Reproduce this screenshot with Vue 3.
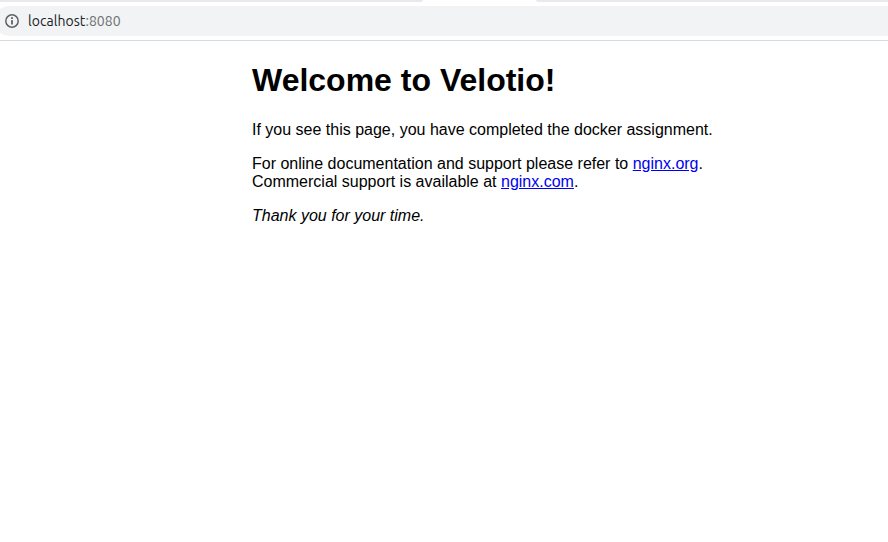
<script setup>
const host = 'localhost'
const port = ':8080'
</script>

<template>
  <div class="window">
    <div class="tabs">
      <div class="strip left"></div>
      <div class="strip right"></div>
    </div>
    <div class="toolbar">
      <div class="address">
        <svg class="info" viewBox="0 0 14 14" width="14" height="14" aria-hidden="true">
          <circle cx="7" cy="7" r="6.2" fill="none" stroke="#5f6368" stroke-width="1.5" />
          <rect x="6.1" y="3.2" width="1.8" height="1.8" fill="#5f6368" />
          <rect x="6.1" y="6.1" width="1.8" height="4.4" fill="#5f6368" />
        </svg>
        <span class="url"><span>{{ host }}</span><span class="port">{{ port }}</span></span>
      </div>
    </div>
    <main class="page">
      <h1>Welcome to Velotio!</h1>
      <p>If you see this page, you have completed the docker assignment.</p>
      <p>
        For online documentation and support please refer to <a href="#">nginx.org</a>.<br />
        Commercial support is available at <a href="#">nginx.com</a>.
      </p>
      <p><em>Thank you for your time.</em></p>
    </main>
  </div>
</template>

<style>
body {
  background: #fff;
}
</style>

<style scoped>
.window {
  height: 542px;
  overflow: hidden;
  background: #fff;
}
.tabs {
  display: flex;
  justify-content: space-between;
  height: 2px;
}
.strip {
  height: 2px;
  background: #e8e8ed;
}
.left {
  width: 423px;
  border-bottom-right-radius: 4px 2px;
}
.right {
  width: 352px;
  border-bottom-left-radius: 4px 2px;
}
.toolbar {
  box-sizing: border-box;
  height: 39px;
  padding: 4px 0;
  border-bottom: 1px solid #d9dadc;
}
.address {
  display: flex;
  align-items: center;
  height: 30px;
  margin-left: -6px;
  padding-left: 11px;
  border-radius: 15px 0 0 15px;
  background: #f1f3f4;
}
.info {
  flex: none;
  margin-right: 9px;
}
.url {
  font: 14px/20px Ubuntu, "Noto Sans", sans-serif;
  letter-spacing: 0.05px;
  color: #202124;
  white-space: nowrap;
}
.port {
  color: #6b6e72;
}
.page {
  display: flow-root;
  padding-left: 252px;
  font: 16px "Liberation Sans", Arial, sans-serif;
  color: #000;
}
h1 {
  margin: 21.44px 0;
  font-size: 32px;
  font-weight: bold;
}
p {
  margin: 16px 0;
}
a {
  color: #0000ee;
  text-decoration: underline;
}
</style>
